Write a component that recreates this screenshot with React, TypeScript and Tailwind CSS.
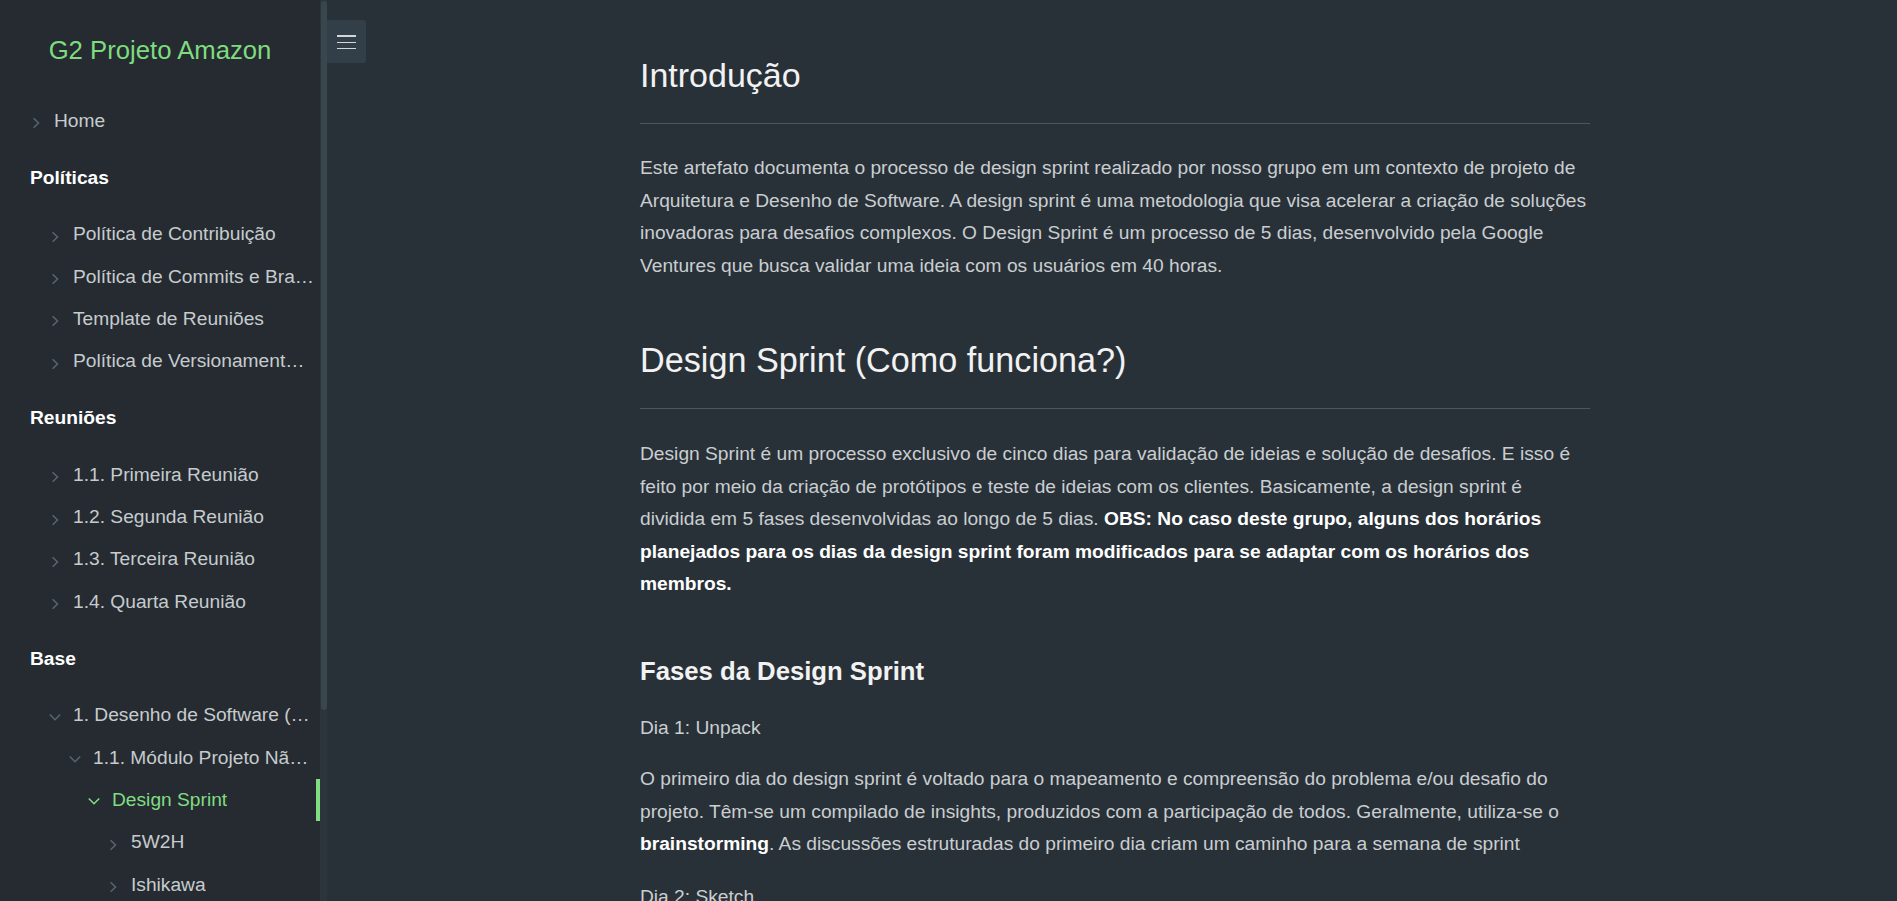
import React from 'react';

type NavEntry =
  | { kind: 'header'; label: string }
  | { kind: 'item'; label: string; level: number; open?: boolean; active?: boolean };

const NAV: NavEntry[] = [
  { kind: 'item', label: 'Home', level: 0 },
  { kind: 'header', label: 'Políticas' },
  { kind: 'item', label: 'Política de Contribuição', level: 1 },
  { kind: 'item', label: 'Política de Commits e Branches', level: 1 },
  { kind: 'item', label: 'Template de Reuniões', level: 1 },
  { kind: 'item', label: 'Política de Versionamento de Código', level: 1 },
  { kind: 'header', label: 'Reuniões' },
  { kind: 'item', label: '1.1. Primeira Reunião', level: 1 },
  { kind: 'item', label: '1.2. Segunda Reunião', level: 1 },
  { kind: 'item', label: '1.3. Terceira Reunião', level: 1 },
  { kind: 'item', label: '1.4. Quarta Reunião', level: 1 },
  { kind: 'header', label: 'Base' },
  { kind: 'item', label: '1. Desenho de Software (Projeto Amazon)', level: 1, open: true },
  { kind: 'item', label: '1.1. Módulo Projeto Não Funcional', level: 2, open: true },
  { kind: 'item', label: 'Design Sprint', level: 3, open: true, active: true },
  { kind: 'item', label: '5W2H', level: 4 },
  { kind: 'item', label: 'Ishikawa', level: 4 },
];

const INDENT = ['pl-[30px]', 'pl-[49px]', 'pl-[69px]', 'pl-[88px]', 'pl-[107px]'];

const Chevron = ({ open, active }: { open?: boolean; active?: boolean }) => (
  <svg
    width="12"
    height="12"
    viewBox="0 0 12 12"
    fill="none"
    stroke="currentColor"
    strokeWidth="1.6"
    className={`${active ? 'text-[#80dd82]' : 'text-[#56646e]'} ${open ? 'translate-y-[1px]' : 'translate-y-[2px]'}`}
  >
    {open ? <path d="M0.8 3.5 L6 8.7 L11.2 3.5" /> : <path d="M3.6 1.2 L8.5 6 L3.6 10.8" />}
  </svg>
);

const Sidebar = () => (
  <aside className="flex w-[327px] shrink-0 bg-[#252b31]">
    <nav className="w-[320px]">
      <div className="flex h-[100px] items-center justify-center text-[25.7px] text-[#7edc7f]">
        G2 Projeto Amazon
      </div>
      <ul>
        {NAV.map((entry, i) =>
          entry.kind === 'header' ? (
            <li
              key={i}
              className="my-[14.5px] flex h-[42.3px] items-center pl-[30px] text-[19.2px] font-bold text-white"
            >
              {entry.label}
            </li>
          ) : (
            <li
              key={i}
              className={`flex h-[42.3px] items-center pr-[5px] text-[19.2px] ${INDENT[entry.level]} ${
                entry.active ? 'border-r-4 border-[#80dd82] text-[#80dd82]' : 'text-[#c6cbce]'
              }`}
            >
              <span className="flex w-[24px] shrink-0">
                <Chevron open={entry.open} active={entry.active} />
              </span>
              <span className="truncate">{entry.label}</span>
            </li>
          ),
        )}
      </ul>
    </nav>
    <div className="w-[7px] bg-[#2c353c]">
      <div className="mx-auto mt-[1px] h-[709px] w-[6px] rounded-full bg-[#3a464e]" />
    </div>
  </aside>
);

const Strong = ({ children }: { children: React.ReactNode }) => (
  <strong className="font-bold text-white">{children}</strong>
);

const Content = () => (
  <main className="relative flex-1 bg-[#293138] pl-[6px]">
    <button className="absolute left-0 top-[20px] flex h-[43px] w-[39px] flex-col items-center justify-center gap-[5px] rounded-r-[3px] bg-[#333f48]">
      <span className="h-[2px] w-[19px] bg-[#d3d7da]" />
      <span className="h-[1px] w-[19px] bg-[#d3d7da]" />
      <span className="h-[1px] w-[19px] bg-[#d3d7da]" />
    </button>

    <article className="mx-auto w-[950px] pt-[55px] text-[19.2px] leading-[32.5px] text-[#c9ced1]">
      <h1 className="border-b border-[#4a5662] pb-[28px] text-[34px] leading-[40px] text-[#f2f2f2]">
        Introdução
      </h1>
      <p className="mt-[28px]">
        Este artefato documenta o processo de design sprint realizado por nosso grupo em um contexto de projeto de
        Arquitetura e Desenho de Software. A design sprint é uma metodologia que visa acelerar a criação de soluções
        inovadoras para desafios complexos. O Design Sprint é um processo de 5 dias, desenvolvido pela Google
        Ventures que busca validar uma ideia com os usuários em 40 horas.
      </p>

      <h2 className="mt-[58px] border-b border-[#4a5662] pb-[28px] text-[34.2px] leading-[40px] text-[#f2f2f2]">
        Design Sprint (Como funciona?)
      </h2>
      <p className="mt-[29px]">
        Design Sprint é um processo exclusivo de cinco dias para validação de ideias e solução de desafios. E isso é
        feito por meio da criação de protótipos e teste de ideias com os clientes. Basicamente, a design sprint é
        dividida em 5 fases desenvolvidas ao longo de 5 dias.{' '}
        <Strong>
          OBS: No caso deste grupo, alguns dos horários planejados para os dias da design sprint foram modificados
          para se adaptar com os horários dos membros.
        </Strong>
      </p>

      <h3 className="mt-[55px] text-[25.7px] font-bold leading-[30px] text-[#f2f2f2]">Fases da Design Sprint</h3>
      <p className="mt-[26px]">Dia 1: Unpack</p>
      <p className="mt-[19px]">
        O primeiro dia do design sprint é voltado para o mapeamento e compreensão do problema e/ou desafio do
        projeto. Têm-se um compilado de insights, produzidos com a participação de todos. Geralmente, utiliza-se o{' '}
        <Strong>brainstorming</Strong>. As discussões estruturadas do primeiro dia criam um caminho para a semana de
        sprint
      </p>
      <p className="mt-[20px]">Dia 2: Sketch</p>
    </article>
  </main>
);

export default function App() {
  return (
    <div className="flex h-[901px] w-full overflow-hidden font-['Liberation_Sans',Arial,sans-serif]">
      <Sidebar />
      <Content />
    </div>
  );
}
